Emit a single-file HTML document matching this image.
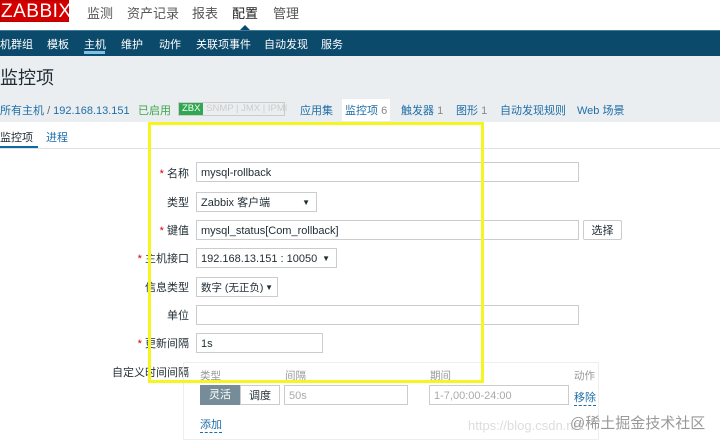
<!DOCTYPE html>
<html><head><meta charset="utf-8"><style>
*{margin:0;padding:0;box-sizing:border-box}
body{width:720px;height:445px;overflow:hidden;background:#fff;font-family:"Liberation Sans","Noto Sans CJK SC",sans-serif;font-size:12px;color:#1f2c33;position:relative}
.a{position:absolute;white-space:nowrap}
.logo{left:0;top:0;width:69px;height:22px;background:#d40000;color:#fff;font-size:19px;line-height:22px;letter-spacing:0.5px;border:1px solid #b00}
.top{top:3px;font-size:13px;color:#555}
.nav{left:0;top:30px;width:720px;height:26px;background:#0c4a6b;border-top:1px solid #3f7a9c}
.nv{top:36px;color:#fff;font-size:11px}
.gray{left:0;top:56px;width:720px;height:66px;background:#ebeef0}
.bc{top:102px;font-size:11px;color:#1f6ea8}
.inp{position:absolute;border:1px solid #ccc;background:#fff;height:20px;font-size:11px;line-height:14px;padding:3px 0 0 4px;color:#1f2c33}
.lab{position:absolute;font-size:11px;text-align:right;right:531px;color:#1f2c33}
.st{color:#d40000}
.arr{position:absolute;right:6px;top:6px;font-size:8px;line-height:8px}
</style></head><body>
<div class="a logo">ZABBIX</div>
<div class="a top" style="left:87px">监测</div>
<div class="a top" style="left:127px">资产记录</div>
<div class="a top" style="left:192px">报表</div>
<div class="a top" style="left:232px;color:#222">配置</div>
<div class="a top" style="left:273px">管理</div>
<div class="a" style="left:240px;top:25px;width:0;height:0;border-left:5px solid transparent;border-right:5px solid transparent;border-bottom:5px solid #0c4a6b"></div>
<div class="a nav"></div>
<div class="a nv" style="left:0">机群组</div>
<div class="a nv" style="left:47px">模板</div>
<div class="a nv" style="left:84px">主机</div>
<div class="a" style="left:84px;top:51px;width:21px;height:3px;background:#7ec0e8"></div>
<div class="a nv" style="left:121px">维护</div>
<div class="a nv" style="left:159px">动作</div>
<div class="a nv" style="left:196px">关联项事件</div>
<div class="a nv" style="left:264px">自动发现</div>
<div class="a nv" style="left:321px">服务</div>
<div class="a gray"></div>
<div class="a" style="left:0;top:64px;font-size:18px;color:#1f2c33">监控项</div>
<div class="a bc" style="left:0">所有主机 <span style="color:#666">/</span> 192.168.13.151</div>
<div class="a bc" style="left:138px;color:#3fa44d">已启用</div>
<div class="a" style="left:178px;top:102px;height:14px;width:107px;border:1px solid #ccc;font-size:9.5px;line-height:12px;color:#ccc"><span style="background:#2fa84f;color:#fff;padding:0 3px;display:inline-block">ZBX</span> SNMP | JMX | IPMI</div>
<div class="a bc" style="left:300px">应用集</div>
<div class="a bc" style="left:342px;top:99px;background:#fff;padding:3px 3px;color:#1f6ea8">监控项 <span style="color:#888">6</span></div>
<div class="a bc" style="left:401px">触发器 <span style="color:#888">1</span></div>
<div class="a bc" style="left:456px">图形 <span style="color:#888">1</span></div>
<div class="a bc" style="left:500px">自动发现规则</div>
<div class="a bc" style="left:577px">Web 场景</div>
<div class="a" style="left:0;top:129px;font-size:11px">监控项</div>
<div class="a" style="left:0;top:146px;width:38px;height:3px;background:#0c6aa8"></div>
<div class="a" style="left:46px;top:129px;font-size:11px;color:#1f6ea8">进程</div>
<div class="a" style="left:0;top:148px;width:720px;height:1px;background:#e0e0e0"></div>

<div class="lab" style="top:165px"><span class="st">* </span>名称</div>
<div class="inp" style="left:196px;top:162px;width:383px">mysql-rollback</div>
<div class="lab" style="top:194px">类型</div>
<div class="inp" style="left:196px;top:192px;width:121px">Zabbix 客户端<span class="arr">▼</span></div>
<div class="lab" style="top:222px"><span class="st">* </span>键值</div>
<div class="inp" style="left:196px;top:220px;width:383px">mysql_status[Com_rollback]</div>
<div class="inp" style="left:583px;top:220px;width:39px;text-align:center;padding-left:0;border-radius:2px">选择</div>
<div class="lab" style="top:250px"><span class="st">* </span>主机接口</div>
<div class="inp" style="left:196px;top:248px;width:141px">192.168.13.151 : 10050<span class="arr">▼</span></div>
<div class="lab" style="top:279px">信息类型</div>
<div class="inp" style="left:196px;top:277px;width:82px;font-size:10.5px">数字 (无正负)<span class="arr" style="right:4px">▼</span></div>
<div class="lab" style="top:307px">单位</div>
<div class="inp" style="left:196px;top:305px;width:383px"></div>
<div class="lab" style="top:335px"><span class="st">* </span>更新间隔</div>
<div class="inp" style="left:196px;top:333px;width:127px">1s</div>
<div class="lab" style="top:364px">自定义时间间隔</div>
<div class="a" style="left:183px;top:362px;width:416px;height:78px;border:1px solid #eee"></div>
<div class="a" style="left:200px;top:368px;font-size:10.5px;color:#999">类型</div>
<div class="a" style="left:285px;top:368px;font-size:10.5px;color:#999">间隔</div>
<div class="a" style="left:430px;top:368px;font-size:10.5px;color:#999">期间</div>
<div class="a" style="left:574px;top:368px;font-size:10.5px;color:#999">动作</div>
<div class="a" style="left:200px;top:385px;width:40px;height:20px;background:#768d99;color:#fff;font-size:11px;line-height:20px;text-align:center">灵活</div>
<div class="inp" style="left:240px;top:385px;width:40px;text-align:center;padding-left:0">调度</div>
<div class="inp" style="left:284px;top:385px;width:124px;color:#aaa">50s</div>
<div class="inp" style="left:429px;top:385px;width:140px;color:#aaa">1-7,00:00-24:00</div>
<div class="a" style="left:574px;top:389px;font-size:11px;color:#1f6ea8;border-bottom:1px dashed #1f6ea8">移除</div>
<div class="a" style="left:200px;top:416px;font-size:11px;color:#1f6ea8;border-bottom:1px dashed #1f6ea8">添加</div>
<div class="a" style="left:468px;top:418px;font-size:13px;color:#ddd">https://blog.csdn.net</div>
<div class="a" style="left:570px;top:412px;font-size:15px;color:#999">@稀土掘金技术社区</div>

<div class="a" style="left:148px;top:122px;width:336px;height:261px;border:3px solid #f5f520"></div>
</body></html>
